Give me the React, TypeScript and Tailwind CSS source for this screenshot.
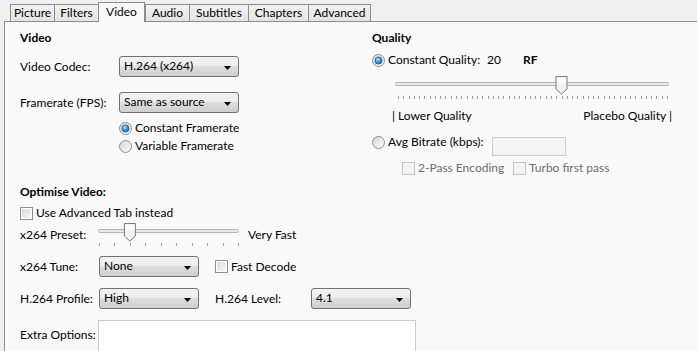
import React from 'react';

function Radio({ checked = false }: { checked?: boolean }) {
  return (
    <svg width="13" height="13" viewBox="0 0 13 13" className="shrink-0">
      <defs>
        <linearGradient id="rbg" x1="0" y1="0" x2="1" y2="1">
          <stop offset="0" stopColor="#d4d4d4" />
          <stop offset="1" stopColor="#ffffff" />
        </linearGradient>
        <radialGradient id="rdot" cx="0.4" cy="0.35" r="0.7">
          <stop offset="0" stopColor="#bfe6fb" />
          <stop offset="0.5" stopColor="#3c9ad8" />
          <stop offset="1" stopColor="#1a5a95" />
        </radialGradient>
      </defs>
      <circle cx="6.5" cy="6.5" r="6" fill="url(#rbg)" stroke="#8f8f8f" />
      {checked && <circle cx="6.5" cy="6.5" r="3.6" fill="url(#rdot)" stroke="#2a5f8f" strokeWidth="0.8" />}
    </svg>
  );
}

function Check({ disabled = false }: { disabled?: boolean }) {
  return (
    <span
      className={`flex h-[13px] w-[13px] shrink-0 items-center justify-center border ${
        disabled ? 'border-[#c4c4c4] bg-[#f4f4f4]' : 'border-[#8e8f8f] bg-white'
      }`}
    >
      <span
        className={`h-[9px] w-[9px] ${
          disabled ? 'bg-[#f4f4f4]' : 'bg-[linear-gradient(135deg,#dadada,#f8f8f8)]'
        }`}
      />
    </span>
  );
}

function Combo({ value, className }: { value: string; className: string }) {
  return (
    <div
      className={`relative flex h-[21px] shrink-0 items-center rounded-[3px] border border-[#707070] bg-[linear-gradient(#f3f3f3,#ebebeb_50%,#dddddd_50%,#cfcfcf)] pl-[4px] pb-[2px] ${className}`}
    >
      <span className="whitespace-nowrap">{value}</span>
      <svg width="7" height="4" viewBox="0 0 7 4" className="absolute right-[7px] top-[9px]">
        <path d="M0 0h7L3.5 4z" fill="#000" />
      </svg>
    </div>
  );
}

function Slider({ width, ticks, start, end, value }: { width: number; ticks: number; start: number; end: number; value: number }) {
  const step = (end - start) / (ticks - 1);
  const tx = start + value * step;
  return (
    <svg width={width} height="24" viewBox={`0 0 ${width} 24`} className="shrink-0">
      <rect x="0.5" y="7.5" width={width - 2} height="3" rx="1" fill="#e7eaea" stroke="#b4b4b4" strokeWidth="1" />
      {Array.from({ length: ticks }).map((_, i) => (
        <rect key={i} x={Math.round(start + i * step)} y="21" width="1" height="3" fill="#a0a0a0" />
      ))}
      <path
        d={`M${tx - 5.5} 1.5h11v12.5l-5.5 5l-5.5 -5z`}
        fill="#f1f1f1"
        stroke="#7a7a7a"
        strokeLinejoin="round"
      />
      <path d={`M${tx - 4.5} 2.5h9v6h-9z`} fill="#fbfbfb" />
    </svg>
  );
}

const tabs = [
  { name: 'Picture', w: 'w-[44px]' },
  { name: 'Filters', w: 'w-[44px]' },
  { name: 'Video', w: 'w-[47px]' },
  { name: 'Audio', w: 'w-[44px]' },
  { name: 'Subtitles', w: 'w-[59px]' },
  { name: 'Chapters', w: 'w-[60px]' },
  { name: 'Advanced', w: 'w-[63px]' },
];

export default function App() {
  return (
    <div className="h-[351px] w-[697px] overflow-hidden whitespace-nowrap bg-[#f0f0f0] font-['Lato','Noto_Sans',sans-serif] text-[12px] leading-[16px] text-black">
      {/* tab strip */}
      <div className="flex h-[21px] items-end pl-[10px]">
        {tabs.map((t, i) =>
          t.name === 'Video' ? (
            <div
              key={t.name}
              className={`relative z-10 -mb-[1px] flex h-[20px] items-center justify-center border-x border-t border-[#898c95] bg-[#f9f9f9] pb-[2px] ${t.w}`}
            >
              {t.name}
            </div>
          ) : (
            <div
              key={t.name}
              className={`flex h-[17px] items-center justify-center border-t border-l border-[#898c95] bg-[linear-gradient(#f2f2f2,#e3e3e3)] ${
                i === tabs.length - 1 ? 'border-r' : ''
              } ${t.w}`}
            >
              {t.name}
            </div>
          )
        )}
      </div>

      {/* tab page */}
      <div className="ml-[4px] flex h-[330px] border-t border-l border-[#898c95] bg-[#f9f9f9] pl-[15px]">
        {/* left column */}
        <div className="flex w-[352px] shrink-0 flex-col">
          <div className="mt-[8px] h-[16px] font-bold">Video</div>
          <div className="mt-[10px] flex h-[21px] items-center">
            <span className="w-[99px] shrink-0">Video Codec:</span>
            <Combo value="H.264 (x264)" className="w-[120px]" />
          </div>
          <div className="mt-[15px] flex h-[21px] items-center">
            <span className="w-[99px] shrink-0">Framerate (FPS):</span>
            <Combo value="Same as source" className="w-[120px]" />
          </div>
          <div className="ml-[99px] mt-[7px] flex h-[16px] items-center gap-[3px]">
            <Radio checked />
            <span>Constant Framerate</span>
          </div>
          <div className="ml-[99px] mt-[2px] flex h-[16px] items-center gap-[3px]">
            <Radio />
            <span>Variable Framerate</span>
          </div>

          <div className="mt-[30px] h-[16px] font-bold">Optimise Video:</div>
          <div className="mt-[5px] flex h-[16px] items-center gap-[3px]">
            <Check />
            <span>Use Advanced Tab instead</span>
          </div>
          <div className="mt-[1px] flex h-[24px] items-start">
            <span className="mt-[5px] w-[78px] shrink-0">x264 Preset:</span>
            <Slider width={142} ticks={10} start={1} end={140} value={2} />
            <span className="ml-[8px] mt-[5px] shrink-0">Very Fast</span>
          </div>
          <div className="mt-[10px] flex h-[21px] items-center">
            <span className="w-[79px] shrink-0">x264 Tune:</span>
            <Combo value="None" className="w-[100px]" />
            <span className="ml-[16px] flex shrink-0 items-center gap-[3px]">
              <Check />
              <span>Fast Decode</span>
            </span>
          </div>
          <div className="mt-[11px] flex h-[21px] items-center">
            <span className="w-[79px] shrink-0">H.264 Profile:</span>
            <Combo value="High" className="w-[100px]" />
            <span className="ml-[16px] w-[96px] shrink-0">H.264 Level:</span>
            <Combo value="4.1" className="w-[100px]" />
          </div>
          <div className="mt-[11px] flex items-start">
            <span className="mt-[7px] w-[78px] shrink-0">Extra Options:</span>
            <div className="h-[40px] w-[318px] shrink-0 border border-[#c9cbd0] bg-white" />
          </div>
        </div>

        {/* right column */}
        <div className="flex flex-1 flex-col">
          <div className="mt-[8px] h-[16px] font-bold">Quality</div>
          <div className="mt-[6px] flex h-[16px] items-center">
            <Radio checked />
            <span className="ml-[3px] w-[99px] shrink-0">Constant Quality:</span>
            <span className="w-[36px] shrink-0">20</span>
            <span className="font-bold">RF</span>
          </div>
          <div className="ml-[23px] mt-[7px] flex">
            <Slider width={275} ticks={52} start={3} end={272} value={31} />
          </div>
          <div className="ml-[20px] mt-[9px] flex h-[16px] w-[280px] justify-between">
            <span>| Lower Quality</span>
            <span>Placebo Quality |</span>
          </div>
          <div className="mt-[10px] flex items-start">
            <span className="flex h-[16px] items-center">
              <Radio />
            </span>
            <span className="ml-[3px] w-[104px] shrink-0">Avg Bitrate (kbps):</span>
            <div className="mt-[3px] h-[19px] w-[74px] shrink-0 border border-[#c9cbd0] bg-[#f4f4f4]" />
          </div>
          <div className="ml-[30px] mt-[4px] flex h-[16px] items-center text-[#6d6d6d]">
            <span className="flex w-[111px] shrink-0 items-center gap-[3px]">
              <Check disabled />
              <span>2-Pass Encoding</span>
            </span>
            <span className="flex items-center gap-[3px]">
              <Check disabled />
              <span>Turbo first pass</span>
            </span>
          </div>
        </div>
      </div>
    </div>
  );
}
